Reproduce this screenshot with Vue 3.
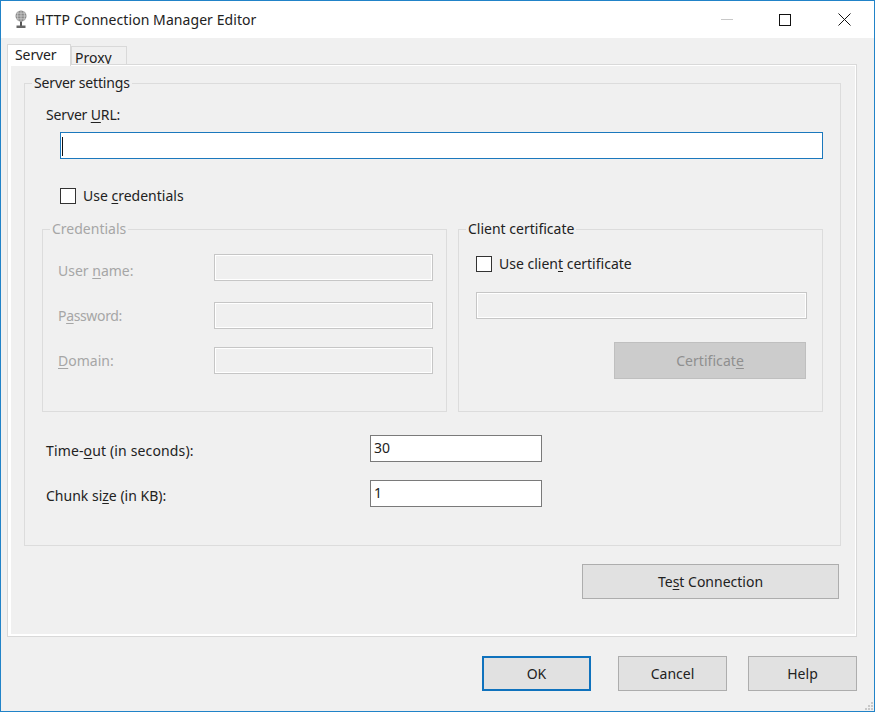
<script setup>
const credentialFields = [
  { before: 'User ', key: 'n', after: 'ame:', cls: 'first' },
  { before: 'P', key: 'a', after: 'ssword:', cls: 'second' },
  { before: '', key: 'D', after: 'omain:', cls: 'third' }
]
</script>

<template>
  <div class="window">
    <header class="titlebar">
      <svg class="app-icon" width="14" height="20" viewBox="0 0 14 20">
        <circle cx="7" cy="6" r="5.5" fill="#8a8a8a" />
        <path d="M1.5 6h11M2.2 3.2h9.6M2.2 8.8h9.6M7 .5v11M4.3 1.2c-1 3-1 6.6 0 9.6M9.7 1.2c1 3 1 6.6 0 9.6" stroke="#d4d4d4" stroke-width=".7" fill="none" />
        <path d="M6 11.5h2V16H6z" fill="#555" />
        <path d="M2.5 15.5h9V18h-9z" fill="#666" />
      </svg>
      <span class="title">HTTP Connection Manager Editor</span>
      <div class="controls">
        <span class="ctl"><span class="min"></span></span>
        <span class="ctl"><span class="max"></span></span>
        <span class="ctl">
          <svg width="13" height="13" viewBox="0 0 13 13"><path d="M.5.5l12 12M12.5.5l-12 12" stroke="#111" stroke-width="1" fill="none" /></svg>
        </span>
      </div>
    </header>

    <main class="body">
      <div class="tabs">
        <div class="tab active">Server</div>
        <div class="tab">Proxy</div>
      </div>

      <section class="panel">
        <fieldset class="group main">
          <legend class="tight">Server settings</legend>
          <label class="url-label tight">Server <u>U</u>RL:</label>
          <div class="input url"><span class="caret"></span></div>
          <label class="check cred-check"><span class="box"></span><span>Use <u>c</u>redentials</span></label>

          <div class="pair">
            <fieldset class="group creds">
              <legend class="disabled">Credentials</legend>
              <div v-for="f in credentialFields" :key="f.key" class="cred-row" :class="f.cls">
                <span class="disabled cred-label">{{ f.before }}<u>{{ f.key }}</u>{{ f.after }}</span>
                <div class="input off"></div>
              </div>
            </fieldset>
            <fieldset class="group client">
              <legend>Client certificate</legend>
              <label class="check"><span class="box"></span><span>Use clien<u>t</u> certificate</span></label>
              <div class="input off client-input"></div>
              <div class="cert-row"><button class="btn cert">Certificat<u>e</u></button></div>
            </fieldset>
          </div>

          <div class="num-row one">
            <span class="num-label wide">Time-<u>o</u>ut (in seconds):</span>
            <div class="input num">30</div>
          </div>
          <div class="num-row two">
            <span class="num-label">Chunk si<u>z</u>e (in KB):</span>
            <div class="input num">1</div>
          </div>
        </fieldset>

        <div class="test-row"><button class="btn test">Te<u>s</u>t Connection</button></div>
      </section>

      <footer class="footer">
        <button class="btn dlg ok">OK</button>
        <button class="btn dlg cancel">Cancel</button>
        <button class="btn dlg help">Help</button>
      </footer>
    </main>

    <svg class="grip" width="10" height="10" viewBox="0 0 10 10">
      <path d="M7 1h2v2H7zM4 4h2v2H4zM7 4h2v2H7zM1 7h2v2H1zM4 7h2v2H4zM7 7h2v2H7z" fill="#c8c8c8" />
    </svg>
  </div>
</template>

<style>
html, body { margin: 0; padding: 0; background: #f0f0f0; }
</style>

<style scoped>
.window {
  position: relative;
  box-sizing: border-box;
  width: 875px;
  height: 712px;
  border: 1px solid #2183c8;
  background: #f0f0f0;
  color: #222;
  font-family: "Noto Sans", "Open Sans", sans-serif;
  font-size: 14px;
  line-height: 20px;
  overflow: hidden;
}
u { text-underline-offset: 2px; text-decoration-thickness: 1px; }
.tight { letter-spacing: -0.15px; }
.wide { letter-spacing: 0.14px; }
.titlebar {
  display: flex;
  align-items: center;
  height: 37px;
  background: #fff;
  padding-left: 13px;
}
.app-icon { flex: none; }
.title { margin-left: 7px; letter-spacing: 0.07px; }
.controls { margin-left: auto; display: flex; }
.ctl {
  width: 59px;
  height: 37px;
  display: flex;
  align-items: center;
  justify-content: center;
}
.min { width: 12px; height: 1px; background: #c8c8c8; }
.max { box-sizing: border-box; width: 12px; height: 12px; margin-right: 2px; border: 1px solid #111; }

.body { padding: 6px 17px 0 6px; }
.tabs { display: flex; align-items: flex-end; height: 20px; }
.tab {
  box-sizing: border-box;
  height: 18px;
  width: 56px;
  padding-left: 3px;
  border: 1px solid #d9d9d9;
  border-bottom: 0;
  overflow: hidden;
  line-height: 22px;
}
.tab.active {
  position: relative;
  z-index: 1;
  height: 22px;
  margin-bottom: -2px;
  width: 64px;
  padding-left: 7px;
  line-height: 20px;
  letter-spacing: -0.1px;
  border-bottom: 0;
  background: #fff;
}
.panel {
  box-sizing: border-box;
  height: 573px;
  border: 1px solid #d9d9d9;
  box-shadow: inset 0 1px 0 #fff, inset 3px 0 0 #fff, inset -1px 0 0 #fff, inset 0 -2px 0 #fff;
  padding: 8px 15px 0 16px;
}
.group {
  margin: 0;
  min-width: 0;
  border: 1px solid #dcdcdc;
  padding: 0;
}
.group legend { padding: 0 2px; line-height: 20px; }
.main { padding: 0 17px 38px 17px; }
.main > legend { margin-left: -10px; }
.url-label { display: block; margin: 12px 0 0 4px; }
.input { box-sizing: border-box; height: 27px; background: #fff; border: 1px solid #7a7a7a; }
.url { margin: 7px 0 0 18px; border-color: #1b78bd; padding: 4px 0 0 1px; }
.caret { display: block; width: 1px; height: 19px; background: #111; }
.check { display: flex; align-items: center; gap: 7px; height: 20px; }
.cred-check { margin: 27px 0 0 18px; }
.box { box-sizing: border-box; width: 16px; height: 16px; background: #fff; border: 1px solid #333; }
.pair { display: grid; grid-template-columns: 405px 365px; gap: 11px; margin-top: 13px; }
.creds { padding: 0 13px 0 15px; height: 191px; }
.creds > legend { margin-left: -8px; }
.client { padding: 0 15px 0 17px; height: 191px; }
.client > legend { margin-left: -10px; }
.disabled { color: #a6a6a6; }
.cred-row { display: flex; justify-content: space-between; align-items: center; }
.cred-row.first { margin-top: 15px; }
.cred-row.first .cred-label { padding-top: 6px; }
.cred-row.second { margin-top: 21px; }
.cred-row.second .cred-label { letter-spacing: -0.35px; }
.cred-row.third { margin-top: 18px; }
.off { background: #f0f0f0; border-color: #c6c6c6; box-shadow: inset 0 0 0 1px #fff; }
.cred-row .off { width: 219px; }
.client .check { margin-top: 15px; }
.client-input { margin-top: 18px; }
.cert-row { display: flex; justify-content: flex-end; margin-top: 23px; padding-right: 1px; }
.btn {
  box-sizing: border-box;
  font: inherit;
  color: inherit;
  background: #e1e1e1;
  border: 1px solid #adadad;
  padding: 0;
  text-align: center;
}
.cert { width: 192px; height: 37px; background: #ccc; border-color: #bfbfbf; color: #8f8f8f; letter-spacing: 0.05px; }
.num-row { display: flex; align-items: center; margin-left: 4px; }
.num-row.one { margin-top: 23px; }
.num-row.two { margin-top: 18px; }
.num-label { width: 324px; padding-top: 5px; }
.num { width: 172px; padding: 2px 0 0 3px; line-height: 20px; }
.test-row { display: flex; justify-content: flex-end; margin-top: 18px; padding-right: 2px; }
.test { width: 257px; height: 35px; }
.footer { display: flex; justify-content: flex-end; margin-top: 19px; }
.dlg { width: 109px; height: 35px; }
.ok { border: 2px solid #0f72bd; margin-right: 27px; }
.cancel { margin-right: 21px; }
.grip { position: absolute; right: 0; bottom: 0; }
</style>
